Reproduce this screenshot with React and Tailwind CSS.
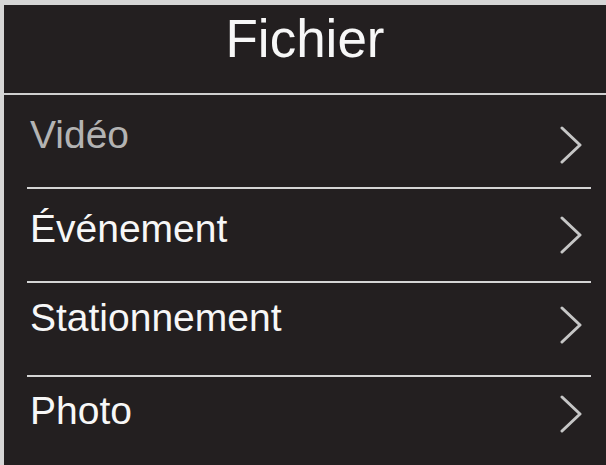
import React from "react";

const items = [
  { label: "Vidéo", dim: true, text: "mt-[20px]", arrow: "mt-[31px]" },
  { label: "Événement", text: "mt-[20px]", arrow: "mt-[27px]" },
  { label: "Stationnement", text: "mt-[15px]", arrow: "mt-[23px]" },
  { label: "Photo", text: "mt-[14px]", arrow: "mt-[18px]" },
];

function Chevron() {
  return (
    <svg width="24" height="38" viewBox="0 0 24 38" className="shrink-0">
      <polyline
        points="3,2 21,19 3,36"
        fill="none"
        stroke="#c6c6c6"
        strokeWidth="3"
        strokeLinecap="round"
        strokeLinejoin="round"
      />
    </svg>
  );
}

export default function App() {
  return (
    <div
      className="w-[606px] h-[465px] bg-[#d6d6d6] pt-[5px] pl-[4px] overflow-hidden"
      style={{ fontFamily: '"Liberation Sans", Arial, sans-serif' }}
    >
      <div className="w-full h-full bg-[#231f20] flex flex-col">
        <header className="h-[88px] shrink-0 pt-[7px] text-center text-[53px] leading-none text-[#f7f7f7]">
          Fichier
        </header>
        <div className="h-[2px] shrink-0 bg-[#cfcfcf]" />
        <ul className="flex flex-col">
          {items.map((it, i) => (
            <li key={it.label} className="flex flex-col">
              <div className="h-[92px] flex items-start justify-between pl-[26px] pr-[23px]">
                <span
                  className={
                    it.text +
                    " text-[39px] leading-none " +
                    (it.dim ? "text-[#b3b3b3]" : "text-[#f7f7f7]")
                  }
                >
                  {it.label}
                </span>
                <div className={it.arrow}>
                  <Chevron />
                </div>
              </div>
              {i < items.length - 1 && (
                <div className="h-[2px] ml-[23px] mr-[15px] bg-[#d4d4d4]" />
              )}
            </li>
          ))}
        </ul>
      </div>
    </div>
  );
}
